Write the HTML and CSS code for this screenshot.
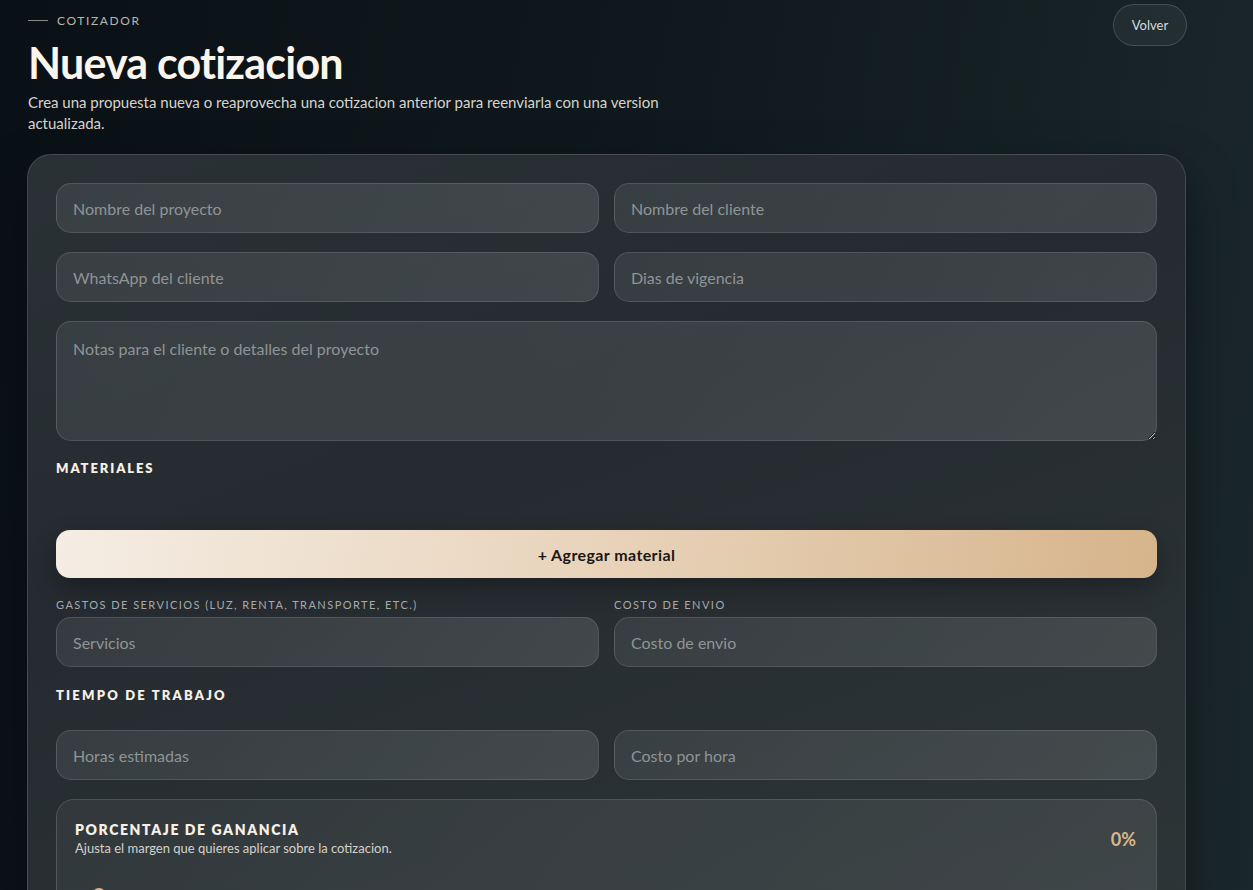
FILE: index.html
```html
<!DOCTYPE html>
<html lang="es">
<head>
  <meta charset="UTF-8">
  <title>Nueva cotizacion</title>
  <link rel="stylesheet" href="styles.css">
</head>
<body>
  <div class="wrap">
    <!-- Header -->
    <header class="top">
      <div class="top-text">
        <div class="eyebrow"><span class="eyebrow-line"></span>COTIZADOR</div>
        <h1>Nueva cotizacion</h1>
        <p class="lead">Crea una propuesta nueva o reaprovecha una cotizacion anterior para reenviarla con una version actualizada.</p>
      </div>
      <button class="back-btn">Volver</button>
    </header>

    <!-- Form card -->
    <form class="card">
      <div class="grid2">
        <input class="field" type="text" placeholder="Nombre del proyecto">
        <input class="field" type="text" placeholder="Nombre del cliente">
        <input class="field" type="text" placeholder="WhatsApp del cliente">
        <input class="field" type="text" placeholder="Dias de vigencia">
      </div>
      <textarea class="field notes" placeholder="Notas para el cliente o detalles del proyecto"></textarea>

      <h3 class="section-title">MATERIALES</h3>
      <div class="materials"></div>
      <button type="button" class="add-btn">+ Agregar material</button>

      <div class="grid2 labelled">
        <label class="lbl">
          <span>GASTOS DE SERVICIOS (LUZ, RENTA, TRANSPORTE, ETC.)</span>
          <input class="field" type="text" placeholder="Servicios">
        </label>
        <label class="lbl">
          <span>COSTO DE ENVIO</span>
          <input class="field" type="text" placeholder="Costo de envio">
        </label>
      </div>

      <h3 class="section-title work">TIEMPO DE TRABAJO</h3>
      <div class="grid2">
        <input class="field" type="text" placeholder="Horas estimadas">
        <input class="field" type="text" placeholder="Costo por hora">
      </div>

      <div class="profit">
        <div class="profit-head">
          <div>
            <div class="profit-title">PORCENTAJE DE GANANCIA</div>
            <div class="profit-sub">Ajusta el margen que quieres aplicar sobre la cotizacion.</div>
          </div>
          <div class="profit-val">0%</div>
        </div>
        <div class="slider">
          <span class="thumb"></span>
        </div>
      </div>
    </form>
  </div>
</body>
</html>
```

FILE: styles.css
```css
/* Base */
* {
  box-sizing: border-box;
}
body {
  margin: 0;
  font-family: Lato, "Noto Sans", sans-serif;
  color: #f4ede4;
  min-height: 100vh;
  background: linear-gradient(100deg, #0a1116 0%, #0f181c 45%, #1b282b 100%);
  overflow: hidden;
}
.wrap {
  width: 1159px;
  margin-left: 27px;
}
/* Header */
.top {
  display: flex;
  justify-content: space-between;
  align-items: flex-start;
  padding-top: 4px;
}
.top-text {
  padding-top: 9px;
  padding-left: 1px;
}
.eyebrow {
  display: flex;
  align-items: center;
  gap: 9px;
  font-size: 12px;
  letter-spacing: 1.6px;
  color: #b9b6b0;
}
.eyebrow-line {
  width: 20px;
  height: 1px;
  background: #8c8a86;
}
h1 {
  margin: 9px 0 0;
  font-size: 43px;
  font-weight: 700;
  letter-spacing: -0.8px;
  line-height: 52px;
  color: #fbf5ec;
}
.lead {
  margin: 3px 0 0;
  width: 660px;
  font-size: 15px;
  line-height: 21px;
  color: #d6d3cd;
}
.back-btn {
  margin-right: -1px;
  width: 74px;
  height: 42px;
  border-radius: 21px;
  border: 1px solid rgba(255, 255, 255, 0.16);
  background: rgba(255, 255, 255, 0.05);
  color: #d8dcdc;
  font-family: inherit;
  font-size: 13px;
}
/* Card */
.card {
  margin-top: 20px;
  padding: 28px 28px 40px;
  border-radius: 24px;
  border: 1px solid rgba(255, 255, 255, 0.13);
  background: linear-gradient(160deg, #2a3135 0%, #252b30 40%, #2d3537 100%);
  box-shadow: 0 20px 50px rgba(0, 0, 0, 0.35);
  height: 760px;
}
.grid2 {
  display: grid;
  grid-template-columns: 1fr 1fr;
  column-gap: 15px;
  row-gap: 19px;
}
.field {
  display: block;
  width: 100%;
  height: 50px;
  padding: 0 16px;
  border-radius: 15px;
  border: 1px solid rgba(255, 255, 255, 0.12);
  background: linear-gradient(120deg, rgba(255, 255, 255, 0.08), rgba(255, 255, 255, 0.12));
  color: #e8e4de;
  font-family: inherit;
  font-size: 16px;
  outline: none;
}
.field::placeholder {
  color: #8f9496;
}
.notes {
  margin-top: 19px;
  height: 120px;
  padding: 17px 16px;
  resize: vertical;
}
.section-title {
  margin: 19px 0 0;
  font-size: 13px;
  font-weight: 800;
  letter-spacing: 1.9px;
  line-height: 16px;
  color: #f7f0e6;
}
.materials {
  height: 54px;
}
.add-btn {
  display: block;
  width: 100%;
  height: 48px;
  border: none;
  border-radius: 14px;
  background: linear-gradient(100deg, #f5ede4 0%, #e8d3ba 50%, #d6b48b 100%);
  box-shadow: 0 10px 24px rgba(0, 0, 0, 0.3);
  color: #1c1714;
  font-family: inherit;
  font-size: 16px;
  font-weight: 700;
  letter-spacing: 0.4px;
}
.labelled {
  margin-top: 20px;
}
.lbl {
  display: flex;
  flex-direction: column;
  gap: 6px;
}
.lbl span {
  font-size: 11px;
  letter-spacing: 1.45px;
  color: #a7a9a9;
}
.section-title.work {
  margin-top: 20px;
  margin-bottom: 27px;
  letter-spacing: 2.2px;
}
/* Profit box */
.profit {
  margin-top: 19px;
  border-radius: 18px;
  border: 1px solid rgba(255, 255, 255, 0.12);
  background: linear-gradient(120deg, rgba(255, 255, 255, 0.05), rgba(255, 255, 255, 0.09));
  padding: 21px 18px 20px;
  height: 140px;
}
.profit-head {
  display: flex;
  justify-content: space-between;
  align-items: center;
}
.profit-title {
  font-size: 14px;
  font-weight: 800;
  letter-spacing: 1.6px;
  color: #f7f0e6;
}
.profit-sub {
  margin-top: 2px;
  font-size: 13px;
  color: #d4d1cb;
}
.profit-val {
  font-size: 18px;
  font-weight: 700;
  color: #d9b68b;
  padding-right: 2px;
}
.slider {
  position: relative;
  margin-top: 36px;
  height: 6px;
  border-radius: 3px;
  background: rgba(255, 255, 255, 0.1);
}
.thumb {
  position: absolute;
  left: 17px;
  top: -4px;
  width: 14px;
  height: 14px;
  border-radius: 50%;
  background: #d9b68b;
}
```
